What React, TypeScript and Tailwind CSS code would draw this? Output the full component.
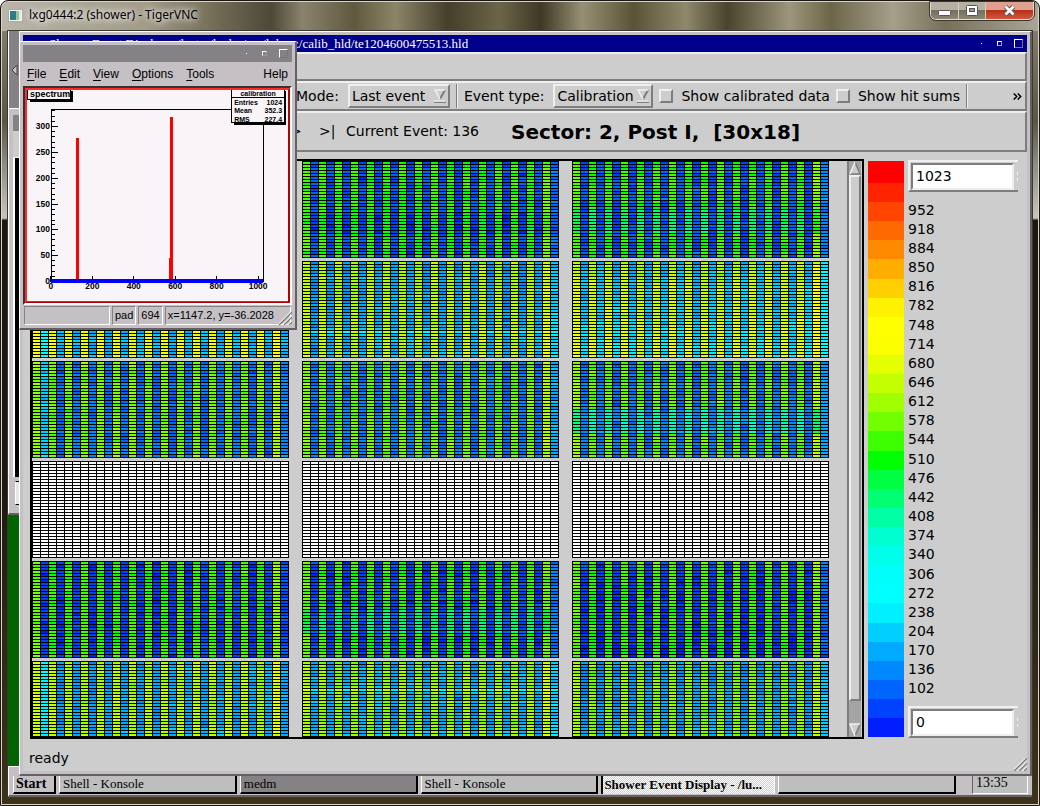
import React from "react";

const PALETTE = [
  "#ff0000", "#ff2400", "#ff4500", "#ff6a00", "#ff8a00", "#ffae00",
  "#ffd000", "#fff200", "#ffff00", "#fbff00", "#e4ff00", "#c4ff00",
  "#a0ff00", "#72ff00", "#3cff00", "#00ff00", "#00ff40", "#00ff72",
  "#00ffa4", "#00ffd0", "#00ffea", "#00fffa", "#00ffff", "#00f0ff",
  "#00ceff", "#00aaff", "#0088ff", "#0064ff", "#0042ff", "#001eff",
];

const LABELS = Array.from({ length: 26 }, (_, i) => 952 - 34 * i);

type Band = { from: number; to: number; hi: number; lo: number };
type Module = { hi: number; lo: number; slope?: number; bands?: Band[]; edge?: boolean };

// hi / lo are palette positions of the even and odd columns of a module
const MODULES: (Module | null)[] = [
  { hi: 14.4, lo: 27.6 },
  { hi: 14.6, lo: 27.7, bands: [{ from: 17, to: 24, hi: 0.4, lo: 0.6 }] },
  { hi: 14.4, lo: 27.5, bands: [{ from: 16, to: 24, hi: 2.3, lo: 0 }] },
  { hi: 10.6, lo: 25.4, slope: -1, edge: true },
  { hi: 11.8, lo: 25.3, slope: -0.6, bands: [{ from: 23, to: 24, hi: -0.6, lo: -2.4 }] },
  { hi: 11.6, lo: 25, slope: -1.8 },
  { hi: 13.1, lo: 26.6, edge: true },
  { hi: 13.3, lo: 26.4 },
  { hi: 13.4, lo: 26.5, bands: [{ from: 16, to: 24, hi: 4.6, lo: -0.6 }] },
  null,
  null,
  null,
  { hi: 14.4, lo: 28 },
  { hi: 14.4, lo: 27.9, bands: [{ from: 16, to: 24, hi: 2.2, lo: -0.4 }] },
  { hi: 14.1, lo: 28, slope: 0.6 },
  { hi: 11.7, lo: 25.2, edge: true },
  { hi: 12.4, lo: 25, bands: [{ from: 9, to: 10, hi: -1.2, lo: -2.2 }] },
  { hi: 13.1, lo: 25.8, slope: -0.8 },
];

function makeRandom(seed: number) {
  let s = seed;
  return () => {
    s = (s * 1103515245 + 12345) % 2147483648;
    return s / 2147483648;
  };
}

function ModuleMap({ index }: { index: number }) {
  const m = MODULES[index];
  const paths: Record<string, string> = {};
  const rnd = makeRandom(index * 977 + 13);
  const colShift = Array.from({ length: 32 }, () => rnd() - 0.5);
  for (let r = 0; r < 32; r++) {
    const rowShift = (rnd() - 0.5) * 0.7;
    for (let c = 0; c < 32; c++) {
      let color = "#ffffff";
      if (m) {
        const high = c % 2 === 0;
        let v = (high ? m.hi : m.lo) + rowShift + colShift[c] * 0.6 + (rnd() - 0.5) * 1.1;
        v += ((m.slope ?? 0) * r) / 31;
        for (const b of m.bands ?? []) if (r >= b.from && r < b.to) v += high ? b.hi : b.lo;
        if (c === 0) v -= 0.8;
        if (c === 1 && m.edge) v -= 2.4;
        if (c === 30) v -= 1.5;
        if (c === 31) v -= index % 3 === 0 ? 0.3 : 1.5;
        if (rnd() < 0.004) v += 1.5;
        color = PALETTE[Math.max(0, Math.min(29, Math.round(v)))];
      }
      paths[color] = (paths[color] ?? "") + `M${c * 8 + 1} ${r * 3 + 1}h7v2h-7z`;
    }
  }
  return (
    <svg width="257" height="97" viewBox="0 0 257 97" shapeRendering="crispEdges" className="block shrink-0 bg-black">
      {Object.entries(paths).map(([fill, d]) => (
        <path key={fill} d={d} fill={fill} />
      ))}
    </svg>
  );
}

function Grip({ className }: { className: string }) {
  return (
    <svg width="13" height="13" viewBox="0 0 13 13" className={className}>
      <path d="M0 13 13 0M5 13l8-8M10 13l3-3" stroke="#777" strokeWidth="1.4" />
      <path d="M-1.5 13 13-1.5M3.5 13l9.500-9.500M8.500 13l4.500-4.500" stroke="#fff" strokeWidth="1" />
    </svg>
  );
}

function WindowButtons() {
  return (
    <div className="flex items-center gap-3">
      <button aria-label="Iconify" className="flex size-2 items-center justify-center">
        <span className="size-px bg-white" />
      </button>
      <button aria-label="Restore" className="size-[5px] border border-t-white border-l-white border-r-[#999] border-b-[#999]" />
      <button aria-label="Maximize" className="size-[9px] border border-t-white border-l-white border-r-[#777] border-b-[#777]" />
    </div>
  );
}

function Picker({ label, value, options, width }: { label: string; value: string; options: string[]; width: string }) {
  return (
    <label className="flex shrink-0 items-center gap-[9px]">
      <span>{label}</span>
      <span className={`relative flex ${width}`}>
        <select
          defaultValue={value}
          className="h-6 w-full appearance-none border-2 border-t-[#efefef] border-l-[#efefef] border-r-[#7d7d7d] border-b-[#7d7d7d] bg-[#cdcdcd] pl-[2px] leading-5"
        >
          {options.map((o) => (
            <option key={o}>{o}</option>
          ))}
        </select>
        <svg width="12" height="14" viewBox="0 0 12 14" className="pointer-events-none absolute top-[5px] right-1">
          <path d="M1 1h10L6 10z" fill="#cdcdcd" />
          <path d="M11 1 6 10" stroke="#7d7d7d" strokeWidth="2" />
          <path d="M6 10 1 1h10" fill="none" stroke="#efefef" strokeWidth="1.500" />
          <path d="M0 12h11" stroke="#efefef" strokeWidth="1" />
          <path d="M0 13.500h12" stroke="#7d7d7d" strokeWidth="1" />
        </svg>
      </span>
    </label>
  );
}

function Tick({ label }: { label: string }) {
  return (
    <label className="flex shrink-0 items-center gap-2">
      <input
        type="checkbox"
        className="size-[14px] appearance-none border-2 border-t-[#efefef] border-l-[#efefef] border-r-[#7d7d7d] border-b-[#7d7d7d] bg-[#cdcdcd] checked:bg-[#555]"
      />
      <span>{label}</span>
    </label>
  );
}

function LimitBox({ label, value }: { label: string; value: string }) {
  return (
    <div className="flex h-8 shrink-0 items-center border-2 border-r-0 border-t-[#efefef] border-l-[#efefef] border-b-[#7d7d7d] pl-px">
      <input
        aria-label={label}
        defaultValue={value}
        className="h-[27px] min-w-0 flex-1 border-2 border-t-[#7d7d7d] border-l-[#7d7d7d] border-r-[#efefef] border-b-[#efefef] bg-white px-[3px] text-[14px] outline-none"
      />
      <span className="ml-[2px] flex w-[2px] flex-col items-end gap-[3px]">
        <span className="h-[3px] w-px bg-[#efefef]" />
        <span className="h-[3px] w-px bg-[#efefef]" />
      </span>
    </div>
  );
}

const Y_MAJOR = [0, 50, 100, 150, 200, 250, 300];
const X_MAJOR = [0, 200, 400, 600, 800, 1000];

function SpectrumPlot() {
  let ticks = "";
  for (let v = 0; v <= 330; v += 10) ticks += `M52 ${282 - Math.round(v * 0.52)}h${v % 50 === 0 ? 6 : 3}`;
  for (let v = 0; v <= 1000; v += 50) ticks += `M${51 + Math.round(v * 0.208)} 282v${v % 200 === 0 ? -6 : -3}`;
  return (
    <svg
      viewBox="25 88 266 216"
      className="block w-full"
      fontFamily='"Liberation Sans", sans-serif'
      fontWeight="bold"
      fontSize="8.5"
    >
      <rect x="25" y="88" width="266" height="216" fill="#b40000" />
      <path d="M25 304V88h266l-2 2H27v212z" fill="#ff2a2a" />
      <rect x="27" y="90" width="262" height="212" fill="#f8f4f8" />
      <g shapeRendering="crispEdges">
        <rect x="51" y="109" width="213" height="1" fill="#000" />
        <rect x="51" y="109" width="1" height="174" fill="#000" />
        <rect x="264" y="109" width="1" height="174" fill="#000" />
        <path d={ticks} transform="translate(0 0.5)" stroke="#000" fill="none" />
        <rect x="76" y="138" width="3" height="143" fill="#f00" />
        <rect x="171" y="117" width="3" height="164" fill="#f00" />
        <rect x="170" y="259" width="1" height="22" fill="#f00" />
        <rect x="51" y="280" width="213" height="4" fill="#00f" />
      </g>
      {Y_MAJOR.map((v) => (
        <text key={v} x="50" y={285 - v * 0.52} textAnchor="end">
          {v}
        </text>
      ))}
      {X_MAJOR.map((v) => (
        <text key={v} x={51 + v * 0.208} y="290" textAnchor="middle">
          {v}
        </text>
      ))}
      <g shapeRendering="crispEdges">
        <rect x="30" y="91" width="43" height="11" fill="#000" />
        <rect x="28" y="89" width="43" height="11" fill="#f8f4f8" stroke="#000" />
        <rect x="235" y="91" width="52" height="34" fill="#000" />
        <rect x="232" y="89" width="53" height="34" fill="#f8f4f8" stroke="#000" />
        <path d="M232 97.500h53" stroke="#000" />
      </g>
      <text x="30" y="97" fontSize="9">spectrum</text>
      <g fontSize="7">
        <text x="259" y="96" textAnchor="middle">calibration</text>
        <text x="235" y="105">Entries</text>
        <text x="283" y="105" textAnchor="end">1024</text>
        <text x="235" y="113">Mean</text>
        <text x="283" y="113" textAnchor="end">352.3</text>
        <text x="235" y="122">RMS</text>
        <text x="283" y="122" textAnchor="end">227.4</text>
      </g>
      <path d="M25 88h266l-2 2H27z" fill="#ff2a2a" />
    </svg>
  );
}

const SUNKEN =
  "border border-t-[#848284] border-l-[#848284] border-r-white border-b-white h-[19px] flex items-center px-[2px]";

function SpectrumWindow() {
  return (
    <section className="absolute top-[10px] left-[11px] z-10 w-[278px] border-t border-r-2 border-b-2 border-l border-t-white border-l-white border-r-[#646064] border-b-[#646064] bg-[#c4c0c4] px-[3px] pt-[3px] pb-[3px] font-['Liberation_Sans',sans-serif] text-black">
      <header className="flex h-[17px] items-center justify-end bg-[#848284] pr-1">
        <WindowButtons />
      </header>
      <nav className="flex h-6 items-center gap-[13px] px-1 text-[12px]">
        {["File", "Edit", "View", "Options", "Tools"].map((m) => (
          <button key={m}>
            <span className="underline underline-offset-2">{m[0]}</span>
            {m.slice(1)}
          </button>
        ))}
        <button className="ml-auto">Help</button>
      </nav>
      <div className="border-2 border-t-[#333] border-l-[#333] border-r-white border-b-white">
        <SpectrumPlot />
      </div>
      <footer className="relative mt-px flex gap-[2px] px-px text-[11px]">
        <div className={`${SUNKEN} w-[86px]`} />
        <div className={SUNKEN}>pad</div>
        <div className={SUNKEN}>694</div>
        <div className={`${SUNKEN} flex-1 whitespace-nowrap`}>x=1147.2, y=-36.2028</div>
        <Grip className="absolute right-0 bottom-0" />
      </footer>
    </section>
  );
}

const BAR =
  "flex items-center border-2 border-l-0 border-t-[#efefef] border-r-[#7d7d7d] border-b-[#7d7d7d] shrink-0 whitespace-nowrap";

function EventDisplay() {
  return (
    <section className="relative ml-[11px] flex min-h-0 flex-1 flex-col border-t border-r-2 border-b-2 border-l border-t-white border-l-white border-r-[#646064] border-b-[#646064] bg-[#c4c0c4] p-[3px]">
      <header className="flex h-[17px] shrink-0 items-center justify-between bg-[#00008b] pr-1 pl-[26px] text-white">
        <h1 className="truncate font-['Liberation_Serif',serif] text-[13px] leading-4">
          Shower Event Display - /lustre/hades/usr/lukasz/calib_hld/te1204600475513.hld
        </h1>
        <WindowButtons />
      </header>
      <div className="flex min-h-0 flex-1 flex-col bg-[#cdcdcd] font-['DejaVu_Sans',sans-serif] text-[14px] text-black">
        <div className={`${BAR} h-[29px]`} />
        <div className={`${BAR} h-[30px] gap-[6px] pl-[273px]`}>
          <Picker label="Mode:" value="Last event" options={["Last event", "All events"]} width="w-[102px]" />
          <span className="h-6 w-[2px] border-l border-l-[#7d7d7d] bg-[#efefef]" />
          <Picker label="Event type:" value="Calibration" options={["Calibration", "Physics"]} width="w-[100px]" />
          <Tick label="Show calibrated data" />
          <Tick label="Show hit sums" />
          <span className="h-6 w-[2px] border-l border-l-[#7d7d7d] bg-[#efefef]" />
          <button aria-label="More tools" className="ml-auto pr-[3px]">
            <svg width="9" height="7" viewBox="0 0 9 7">
              <path d="m.7.500 3 3-3 3m4-6 3 3-3 3" fill="none" stroke="#000" strokeWidth="1.500" />
            </svg>
          </button>
        </div>
        <div className={`${BAR} h-[41px] pl-[267px]`}>
          <button aria-label="Next event" className="w-[29px] text-left">&gt;</button>
          <button aria-label="Last event" className="w-[27px] text-left">&gt;|</button>
          <span className="w-[165px]">Current Event: 136</span>
          <h2 className="text-[20px] font-bold whitespace-pre">Sector: 2, Post I,  [30x18]</h2>
        </div>

        <div className="flex min-h-0 flex-1 gap-1 pt-[7px] pr-[9px] pl-[7px]">
          <div className="flex min-w-0 flex-1 overflow-hidden border-2 border-black">
            <div className="grid flex-1 grid-cols-[repeat(3,257px)] content-start gap-x-[13px] gap-y-[3px] overflow-hidden">
              {MODULES.map((_, i) => (
                <ModuleMap key={i} index={i} />
              ))}
            </div>
            <div className="mr-px flex w-[14px] flex-col border-l-2 border-l-[#7d7d7d] bg-[#a4a4a4]">
              <button aria-label="Scroll up">
                <svg width="12" height="14" viewBox="0 0 12 14" className="block">
                  <path d="M6 1 1 13h10z" fill="#cdcdcd" />
                  <path d="M1 13h10L6 1" fill="none" stroke="#7d7d7d" strokeWidth="1.500" />
                  <path d="M6 1 1 13" stroke="#efefef" strokeWidth="1.500" />
                </svg>
              </button>
              <div className="mb-[22px] flex-1 border-2 border-t-[#efefef] border-l-[#efefef] border-r-[#7d7d7d] border-b-[#7d7d7d] bg-[#cdcdcd]" />
              <button aria-label="Scroll down">
                <svg width="12" height="14" viewBox="0 0 12 14" className="block">
                  <path d="M1 1h10L6 13z" fill="#cdcdcd" />
                  <path d="M11 1 6 13" stroke="#7d7d7d" strokeWidth="1.500" />
                  <path d="M6 13 1 1h10" fill="none" stroke="#efefef" strokeWidth="1.500" />
                </svg>
              </button>
            </div>
          </div>
          <div className="flex w-9 shrink-0 flex-col py-[2px]">
            {PALETTE.map((c, i) => (
              <div key={c} className={i === 0 ? "h-[22px] shrink-0" : "flex-1"} style={{ background: c }} />
            ))}
          </div>
          <div className="flex w-[110px] shrink-0 flex-col py-px">
            <LimitBox label="Upper limit" value="1023" />
            <ul className="my-2 flex min-h-0 flex-1 flex-col">
              {LABELS.map((n) => (
                <li key={n} className="flex min-h-0 flex-1 items-center leading-4">
                  {n}
                </li>
              ))}
            </ul>
            <LimitBox label="Lower limit" value="0" />
          </div>
        </div>
        <footer className="relative flex h-8 shrink-0 items-center px-[6px] pt-[6px]">
          ready
          <Grip className="absolute right-0 bottom-0" />
        </footer>
      </div>
    </section>
  );
}

const TASK =
  "min-w-0 flex-1 truncate border-r-2 border-b-2 border-l border-l-white border-r-black border-b-black px-[3px] text-left text-[13px] leading-[14px]";

function Taskbar() {
  return (
    <footer className="flex h-[21px] shrink-0 gap-[3px] border-b-2 border-l border-l-white border-b-[#646064] bg-[#c4c0c4] pr-1 pl-1 font-['Liberation_Serif',serif] text-[14px] leading-4 text-black">
      <button className="h-[18px] w-[43px] border-r-2 border-b-2 border-l border-l-white border-r-black border-b-black bg-[#c4c0c4] pl-[2px] text-left leading-[14px] font-bold">
        Start
      </button>
      <button className={`${TASK} h-[18px] bg-[#bebebe]`}>Shell - Konsole</button>
      <button className={`${TASK} h-[18px] bg-[#848284]`}>medm</button>
      <button className={`${TASK} h-[18px] bg-[#bebebe]`}>Shell - Konsole</button>
      <button className="h-[18px] min-w-0 flex-1 truncate border-r border-l-2 border-l-black border-r-white bg-[repeating-conic-gradient(#ffffff_0_25%,#d0d0d0_0_50%)] bg-[length:2px_2px] px-px text-left text-[13px] leading-[14px] font-bold">
        Shower Event Display - /lu...
      </button>
      <button aria-label="Empty task" className={`${TASK} h-[18px] bg-[#bebebe]`} />
      <time className="ml-[13px] h-[18px] w-14 border-r border-b border-l border-l-[#646064] border-r-white border-b-white bg-[#bebebe] pl-[3px] leading-[14px]">
        13:35
      </time>
    </footer>
  );
}

function BackgroundWindows() {
  return (
    <>
      <div className="absolute inset-0 bg-[#006400]" />
      <div className="absolute top-0 left-0 h-[78px] w-5 border-b border-l border-b-white border-l-white bg-[#848284]">
        <svg width="7" height="12" viewBox="0 0 7 12" className="absolute top-[33px] left-[2px]">
          <path d="M6 1 1 6l5 5z" fill="#c4c0c4" stroke="#444" />
        </svg>
      </div>
      <div className="absolute top-[77px] left-0 h-[407px] w-5 border-t border-b-2 border-l border-t-white border-b-[#646064] border-l-white bg-[#c4c0c4] pt-[6px] pl-1">
        <div className="h-4 bg-[#848284]" />
        <div className="h-[26px] bg-[#cdcdcd]" />
        <div className="h-[320px] border-t border-l-2 border-t-white border-l-white bg-black" />
        <div className="mt-1 ml-[2px] h-6 border border-l-white border-t-black border-b-black bg-[#e6e6e6]" />
      </div>
      <div className="absolute inset-x-0 bottom-0 h-[31px] border-t border-l border-white bg-[#c4c0c4]" />
    </>
  );
}

export default function App() {
  return (
    <div className="flex h-screen flex-col overflow-hidden rounded-t-lg border border-[#1a1712] bg-[linear-gradient(180deg,#8d8975_0%,#5c5543_15%,#8a8a80_20%,#c8c4be_27%,#1c1710_27.3%,#1c1710_60%,#2d2616_75%,#3d3216_100%)] px-[7px] pb-2 shadow-[inset_1px_1px_0_#d8d4c8,inset_-1px_-1px_0_#d8d4c8]">
      <header className="-mx-[6px] mt-px flex h-[29px] shrink-0 items-start rounded-t-md bg-[linear-gradient(90deg,#b9b5aa_0%,#aaa694_8%,#a19b88_14%,#77705a_20%,#4d4838_26%,#8a826c_29%,#60593f_34%,#8d8568_38%,#453f2c_43%,#6c6548_48%,#3e3826_52%,#978f74_56%,#5a5338_61%,#8f886c_66%,#4a442e_70%,#9d967c_76%,#6c6548_80%,#a59f8b_86%,#77705a_91%,#a9a597_100%)] pr-1 pl-[6px]">
        <svg width="15" height="13" viewBox="0 0 15 13" className="mt-[7px]">
          <rect x=".5" y=".5" width="14" height="12" fill="#f4f4f4" stroke="#aaa" />
          <rect x="2" y="2" width="6" height="9" fill="#2b7e86" />
          <rect x="8" y="2" width="3" height="9" fill="#9cc49a" />
          <rect x="11" y="2" width="2" height="9" fill="#dfe6ee" />
        </svg>
        <span className="mt-[5px] ml-[6px] font-['Noto_Sans','Open_Sans',sans-serif] text-[12px] leading-4 text-black [text-shadow:0_0_6px_#fff,0_0_10px_#fff]">
          lxg0444:2 (shower) - TigerVNC
        </span>
        <div className="ml-auto flex h-[18px] overflow-hidden rounded-b-md border border-t-0 border-[#e2ddd2] outline outline-[#3b372c]">
          <button aria-label="Minimize" className="flex w-[28px] items-center justify-center border-r border-[#d4cfc2] bg-[linear-gradient(#b5b0a2_0_45%,#746e5c_50%,#8d8876)]">
            <svg width="13" height="6" viewBox="0 0 13 6" className="mt-1">
              <rect x=".5" y=".5" width="12" height="5" rx="1" fill="#fff" stroke="#555" />
            </svg>
          </button>
          <button aria-label="Maximize" className="flex w-[27px] items-center justify-center border-r border-[#d4cfc2] bg-[linear-gradient(#b5b0a2_0_45%,#746e5c_50%,#8d8876)]">
            <svg width="12" height="11" viewBox="0 0 12 11">
              <rect x=".5" y=".5" width="11" height="10" rx="1" fill="#fff" stroke="#555" />
              <rect x="3.500" y="3.500" width="5" height="3" fill="#999" stroke="#555" />
            </svg>
          </button>
          <button aria-label="Close" className="flex w-[47px] items-center justify-center bg-[linear-gradient(#e0a090_0_45%,#b8301a_50%,#d1583c)]">
            <svg width="13" height="11" viewBox="0 0 13 11">
              <path d="m2.500 1.500 8 8m0-8-8 8" stroke="#4a4a55" strokeWidth="4.500" />
              <path d="m2.500 1.500 8 8m0-8-8 8" stroke="#fff" strokeWidth="2.800" />
            </svg>
          </button>
        </div>
      </header>
      <main className="relative flex min-h-0 flex-1 flex-col outline outline-[#3a382e]">
        <BackgroundWindows />
        <EventDisplay />
        <div className="relative flex flex-col">
          <Taskbar />
        </div>
        <SpectrumWindow />
      </main>
    </div>
  );
}
